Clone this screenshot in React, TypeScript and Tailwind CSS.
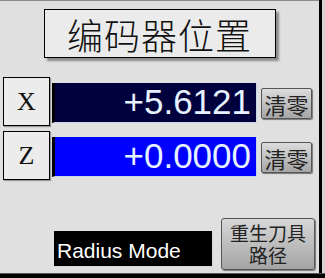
export default function App() {
    const axes = [
        { name: "X", value: "+5.6121", bg: "bg-[#00003c]" },
        { name: "Z", value: "+0.0000", bg: "bg-[#0000ff]" },
    ]

    return (
        <div className="flex h-[278px] w-[325px] flex-col bg-[#e0e0e0]">
            <div className="flex flex-1">
                <div className="flex w-[319px] flex-col border-t border-[#8a8a8a]">
                    {/* title */}
                    <div className="mt-[8px] flex justify-center">
                        <div className="flex h-[49px] w-[232px] items-center justify-center border border-black bg-[#ebebeb] shadow-[3px_3px_2px_#8c8c8c]">
                            <span className="font-['Noto_Sans_CJK_SC',sans-serif] text-[36px] font-light leading-none tracking-[1px] text-[#111]">
                                编码器位置
                            </span>
                        </div>
                    </div>

                    {/* axis rows */}
                    <div className="mt-[19px] flex flex-col gap-[5px]">
                        {axes.map((axis) => (
                            <div key={axis.name} className="flex h-[49px] items-start">
                                <div className="ml-[3px] flex h-[49px] w-[47px] items-center justify-center border border-black bg-[#ececec] shadow-[1px_1px_1px_#9a9a9a]">
                                    <span className="font-['Liberation_Serif',serif] text-[26px] leading-none text-[#111]">
                                        {axis.name}
                                    </span>
                                </div>
                                <div
                                    className={`ml-[2px] mt-[6px] flex h-[40px] w-[205px] items-center justify-end overflow-hidden border-b border-l-[3px] border-r border-b-[#c8d4e8] border-l-black border-r-[#c8d4e8] pb-[3px] pr-[5px] ${axis.bg}`}
                                >
                                    <span className="font-['Liberation_Sans',sans-serif] text-[35px] leading-none text-[#e6f2ff]">
                                        {axis.value}
                                    </span>
                                </div>
                                <button className="ml-[4px] mt-[11px] flex h-[31px] w-[51px] items-center justify-center rounded-[2px] border border-[#555] bg-gradient-to-b from-[#dcdcdc] to-[#a6a6a6] shadow-[1px_1px_1px_#777]">
                                    <span className="font-['Noto_Sans_CJK_SC',sans-serif] text-[22px] leading-none text-[#222]">
                                        清零
                                    </span>
                                </button>
                            </div>
                        ))}
                    </div>

                    {/* bottom */}
                    <div className="mt-auto mb-[3px] flex items-end">
                        <div className="mb-[3px] ml-[54px] flex h-[36px] w-[159px] items-center border-b border-r border-[#d8d8d8] bg-black pl-[3px] pt-[4px]">
                            <span className="font-['Liberation_Sans',sans-serif] text-[21px] leading-none text-white">
                                Radius Mode
                            </span>
                        </div>
                        <button className="ml-[8px] flex h-[52px] w-[94px] flex-col items-center justify-center rounded-[3px] border border-[#555] bg-gradient-to-b from-[#d8d8d8] to-[#a4a4a4] shadow-[1px_1px_1px_#777]">
                            <span className="font-['Noto_Sans_CJK_SC',sans-serif] text-[19px] leading-[22px] text-[#222]">
                                重生刀具
                            </span>
                            <span className="font-['Noto_Sans_CJK_SC',sans-serif] text-[19px] leading-[22px] text-[#222]">
                                路径
                            </span>
                        </button>
                    </div>
                </div>
                <div className="w-[3px] bg-black" />
                <div className="flex-1 bg-[#d4d4d4]" />
            </div>
            <div className="h-[1px] bg-[#555]" />
            <div className="h-[4px] bg-black" />
        </div>
    )
}
